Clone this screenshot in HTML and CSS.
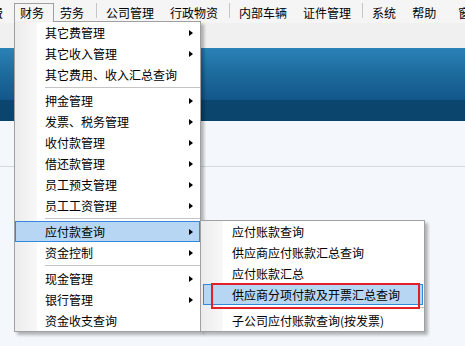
FILE: index.html
```html
<!DOCTYPE html>
<html lang="zh-CN">
<head>
<meta charset="utf-8">
<title>财务菜单</title>
<link rel="stylesheet" href="styles.css">
</head>
<body>
<div class="app">
  <div class="menubar">
    <div class="mi first">费</div>
    <div class="mi open">财务
      <div class="menu main">
        <div class="row"><span>其它费管理</span><i class="arr"></i></div>
        <div class="row"><span>其它收入管理</span><i class="arr"></i></div>
        <div class="row"><span>其它费用、收入汇总查询</span></div>
        <div class="msep"></div>
        <div class="row"><span>押金管理</span><i class="arr"></i></div>
        <div class="row"><span>发票、税务管理</span><i class="arr"></i></div>
        <div class="row"><span>收付款管理</span><i class="arr"></i></div>
        <div class="row"><span>借还款管理</span><i class="arr"></i></div>
        <div class="row"><span>员工预支管理</span><i class="arr"></i></div>
        <div class="row"><span>员工工资管理</span><i class="arr"></i></div>
        <div class="msep"></div>
        <div class="row hl"><span>应付款查询</span><i class="arr"></i></div>
        <div class="row"><span>资金控制</span><i class="arr"></i></div>
        <div class="msep"></div>
        <div class="row"><span>现金管理</span><i class="arr"></i></div>
        <div class="row"><span>银行管理</span><i class="arr"></i></div>
        <div class="row"><span>资金收支查询</span></div>
        <div class="menu sub">
          <div class="row"><span>应付账款查询</span></div>
          <div class="row"><span>供应商应付账款汇总查询</span></div>
          <div class="row"><span>应付账款汇总</span></div>
          <div class="row hl"><span>供应商分项付款及开票汇总查询</span><b class="mark"></b></div>
          <div class="msep"></div>
          <div class="row"><span>子公司应付账款查询(按发票)</span></div>
        </div>
      </div>
    </div>
    <div class="mi">劳务</div>
    <div class="sep wide"></div>
    <div class="mi">公司管理</div>
    <div class="mi">行政物资</div>
    <div class="sep"></div>
    <div class="mi">内部车辆</div>
    <div class="mi">证件管理</div>
    <div class="sep"></div>
    <div class="mi">系统</div>
    <div class="mi">帮助</div>
    <div class="mi cut">窗</div>
  </div>
  <div class="toolbar"></div>
  <div class="banner"></div>
  <div class="content"><div class="rule"></div></div>
</div>
</body>
</html>
```

FILE: styles.css
```css
html, body {
  margin: 0;
  padding: 0;
  background: #f4f8fc;
}
body {
  width: 465px;
  height: 346px;
  overflow: hidden;
  font-family: "Noto Sans CJK SC", "Noto Sans", sans-serif;
  font-size: 12px;
  color: #000;
}
.app {
  width: 465px;
  height: 346px;
  display: flex;
  flex-direction: column;
}
.menubar {
  height: 23px;
  box-sizing: border-box;
  padding-top: 3px;
  background: #f5f5f5;
  display: flex;
  align-items: flex-start;
  white-space: nowrap;
  position: relative;
  z-index: 5;
}
.mi {
  height: 17px;
  line-height: 17px;
  padding: 0 9px 0 5px;
  border: 1px solid transparent;
  border-bottom: 0;
  flex: none;
}
.mi.first {
  margin-left: -15px;
  margin-right: 1px;
}
.mi.cut {
  margin-left: 6px;
}
.mi.open {
  position: relative;
  border-color: #a0a0a0;
  background: #f5f5f5;
}
.sep {
  flex: none;
  width: 1px;
  height: 15px;
  background: #c6c6c6;
  margin: 0 3px 0 1px;
}
.sep.wide {
  margin-left: 2px;
}
.toolbar {
  height: 25px;
  background: #f0f0f0;
  flex: none;
}
.banner {
  height: 73px;
  flex: none;
  background: linear-gradient(to bottom, #2b82b7 0px, #1d6a9d 26px, #13578a 52px, #0b466f 52px, #0a446c 73px);
}
.content {
  flex: 1;
  background: #f4f8fc;
}
.rule {
  margin-top: 45px;
  height: 1px;
  background: #d2d9e0;
}

/* dropdown menus */
.menu {
  position: absolute;
  box-sizing: border-box;
  border: 1px solid #a0a0a0;
  background: linear-gradient(to right, #ececec 0px, #f8f8f8 22px, #ffffff 22px);
  box-shadow: 3px 3px 3px rgba(0, 0, 0, 0.28);
  line-height: 19px;
}
.menu.main {
  left: -1px;
  top: 100%;
  width: 187px;
}
.menu.main::before {
  content: "";
  position: absolute;
  left: 0;
  top: -1px;
  width: 38px;
  height: 1px;
  background: #f0f0f0;
}
.menu.sub {
  left: 185px;
  top: 198px;
  width: 225px;
  z-index: 2;
}
.row {
  height: 19px;
  border: 1px solid transparent;
  padding: 0 6px 0 29px;
  display: flex;
  align-items: center;
  justify-content: space-between;
  position: relative;
}
.sub .row {
  margin: 0 1px 0 2px;
  padding-left: 28px;
}
.row.hl {
  background: #b6d6f3;
  border-color: #3488da;
}
.arr {
  width: 0;
  height: 0;
  border-left: 4px solid #000;
  border-top: 3.5px solid transparent;
  border-bottom: 3.5px solid transparent;
}
.msep {
  height: 5px;
  box-sizing: border-box;
  padding-top: 2px;
  margin-left: 30px;
}
.msep::before {
  content: "";
  display: block;
  height: 1px;
  background: #c4c4c4;
}
.sub .msep {
  margin-left: 31px;
}
.mark {
  position: absolute;
  left: 7px;
  top: -2px;
  width: 209px;
  height: 26px;
  box-sizing: border-box;
  border: 2px solid #e3202a;
}
```
